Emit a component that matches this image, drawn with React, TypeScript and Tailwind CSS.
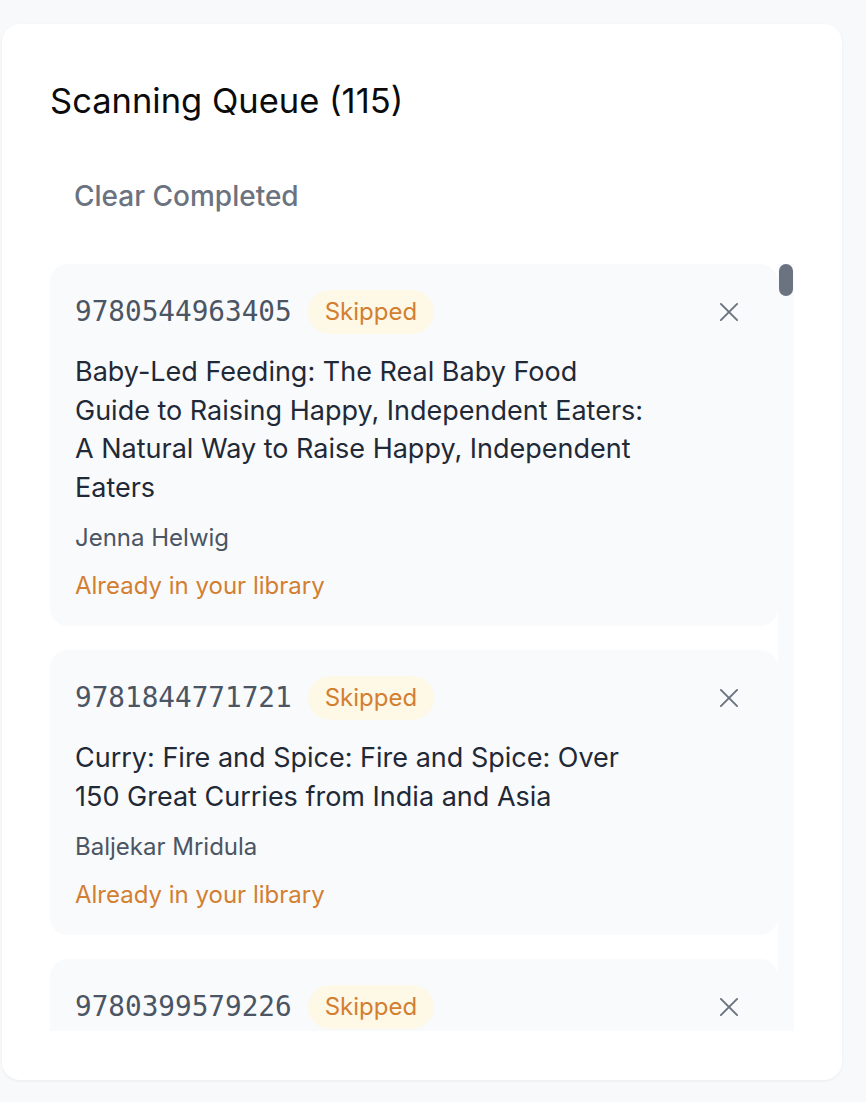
import React from "react";

type Item = { isbn: string; title: string; author: string };

const items: Item[] = [
  {
    isbn: "9780544963405",
    title:
      "Baby-Led Feeding: The Real Baby Food Guide to Raising Happy, Independent Eaters: A Natural Way to Raise Happy, Independent Eaters",
    author: "Jenna Helwig",
  },
  {
    isbn: "9781844771721",
    title:
      "Curry: Fire and Spice: Fire and Spice: Over 150 Great Curries from India and Asia",
    author: "Baljekar Mridula",
  },
  {
    isbn: "9780399579226",
    title: "The Whole30: The 30-Day Guide to Total Health and Food Freedom",
    author: "Melissa Hartwig",
  },
];

function XIcon() {
  return (
    <svg width="30" height="30" viewBox="0 0 24 24" fill="none" stroke="#6b7280" strokeWidth="1.5" strokeLinecap="round">
      <path d="M5.5 5.5 18.5 18.5" />
      <path d="M18.5 5.5 5.5 18.5" />
    </svg>
  );
}

function Card({ item }: { item: Item }) {
  return (
    <div className="rounded-[18px] bg-[#f9fafb] px-[25px] pt-[26px] pb-[25px]">
      <div className="flex h-[44px] items-center">
        <span className="font-['DejaVu_Sans_Mono',monospace] text-[27.7px] leading-[44px] text-[#4b5563]">
          {item.isbn}
        </span>
        <span className="ml-[16px] flex h-[44px] items-center rounded-full bg-[#fef8e7] px-[17px] text-[24px] text-[#d27f32]">
          Skipped
        </span>
        <button className="ml-auto mr-[4px] flex h-[40px] w-[40px] items-center justify-center">
          <XIcon />
        </button>
      </div>
      <div className="mt-[19px] w-[584px] text-[27px] leading-[38.5px] text-[#1f2937]">
        {item.title}
      </div>
      <div className="mt-[16px] text-[24px] leading-[30px] text-[#4b5563]">{item.author}</div>
      <div className="mt-[18px] text-[24px] leading-[30px] text-[#d27f32]">Already in your library</div>
    </div>
  );
}

export default function App() {
  return (
    <div className="min-h-[1102px] bg-[#f8f9fb] pt-[24px] pl-[2px] font-['Inter','Noto_Sans',sans-serif]">
      <div className="w-[840px] h-[1056px] rounded-[18px] bg-white shadow-[0_1px_3px_rgba(0,0,0,0.06)] pl-[48px] pr-[48px] pt-[56px]">
        <h2 className="text-[34.5px] leading-[42px] font-normal text-[#0b0b0b]">Scanning Queue (115)</h2>
        <button className="mt-[50px] h-[48px] px-[24px] text-[28px] font-medium text-[#6b7280]">
          Clear Completed
        </button>
        <div className="mt-[44px] flex h-[767px]">
          <div className="flex flex-1 flex-col gap-[24px] overflow-hidden">
            {items.map((it) => (
              <Card key={it.isbn} item={it} />
            ))}
          </div>
          <div className="w-[16px] bg-[#f9fafb] flex flex-col items-center">
            <div className="h-[32px] w-[14px] rounded-full bg-[#6b7280]" />
          </div>
        </div>
      </div>
    </div>
  );
}
